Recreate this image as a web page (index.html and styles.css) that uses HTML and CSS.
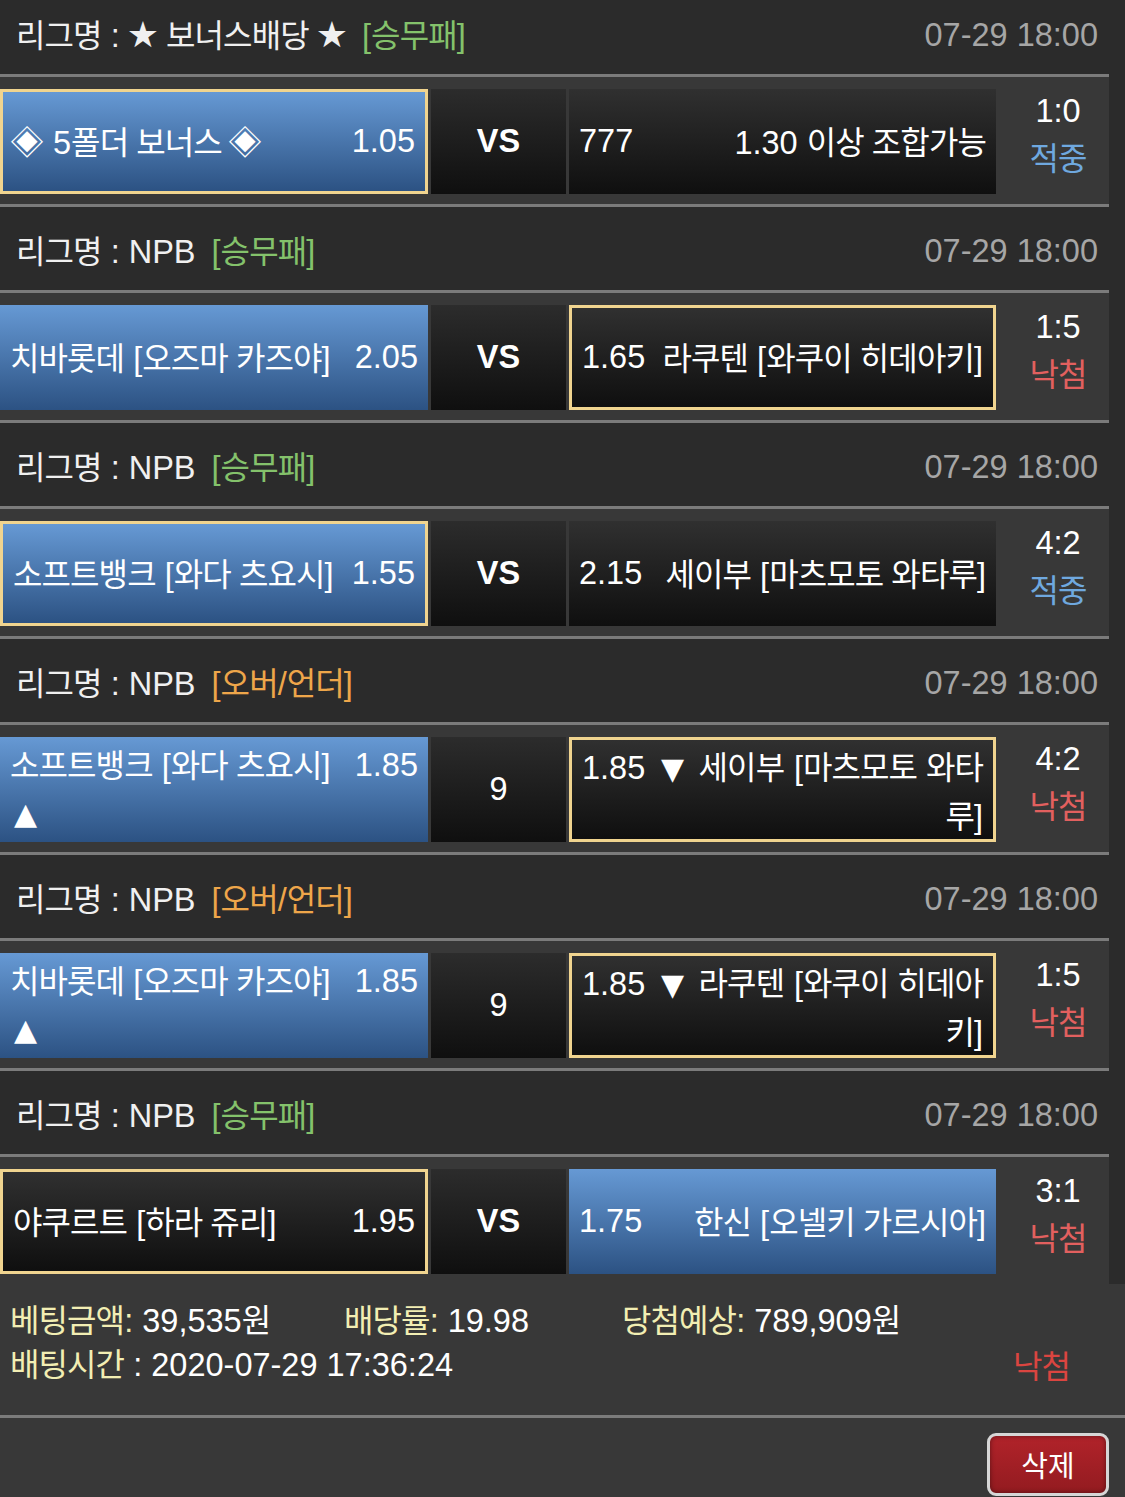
FILE: index.html
```html
<!DOCTYPE html>
<html lang="ko">
<head>
<meta charset="utf-8">
<title>베팅내역</title>
<link rel="stylesheet" href="styles.css">
</head>
<body>
<div class="list">
  <div class="hd first">
    <div class="league"><span class="k">리그명</span> : <span class="star">★</span> <span class="k">보너스배당</span> <span class="star">★</span> <span class="tag win">[<span class="k">승무패</span>]</span></div>
    <div class="date">07-29 18:00</div>
  </div>
  <div class="sep"></div>
  <div class="match">
    <div class="box l blue sel"><span><span class="dia">◈</span> 5<span class="k">폴더 보너스</span> <span class="dia">◈</span></span><span>1.05</span></div>
    <div class="mid bold">VS</div>
    <div class="box r dark"><span>777</span><span>1.30 <span class="k">이상 조합가능</span></span></div>
    <div class="score"><div class="sl">1:0</div><div class="sl k hit">적중</div></div>
  </div>
  <div class="sep"></div>

  <div class="hd">
    <div class="league"><span class="k">리그명</span> : NPB <span class="tag win">[<span class="k">승무패</span>]</span></div>
    <div class="date">07-29 18:00</div>
  </div>
  <div class="sep"></div>
  <div class="match">
    <div class="box l blue"><span><span class="k">치바롯데</span> [<span class="k">오즈마 카즈야</span>]</span><span>2.05</span></div>
    <div class="mid bold">VS</div>
    <div class="box r dark sel"><span>1.65</span><span><span class="k">라쿠텐</span> [<span class="k">와쿠이 히데아키</span>]</span></div>
    <div class="score"><div class="sl">1:5</div><div class="sl k lose">낙첨</div></div>
  </div>
  <div class="sep"></div>

  <div class="hd">
    <div class="league"><span class="k">리그명</span> : NPB <span class="tag win">[<span class="k">승무패</span>]</span></div>
    <div class="date">07-29 18:00</div>
  </div>
  <div class="sep"></div>
  <div class="match">
    <div class="box l blue sel"><span><span class="k">소프트뱅크</span> [<span class="k">와다 츠요시</span>]</span><span>1.55</span></div>
    <div class="mid bold">VS</div>
    <div class="box r dark"><span>2.15</span><span><span class="k">세이부</span> [<span class="k">마츠모토 와타루</span>]</span></div>
    <div class="score"><div class="sl">4:2</div><div class="sl k hit">적중</div></div>
  </div>
  <div class="sep"></div>

  <div class="hd">
    <div class="league"><span class="k">리그명</span> : NPB <span class="tag ou-tag">[<span class="k">오버</span>/<span class="k">언더</span>]</span></div>
    <div class="date">07-29 18:00</div>
  </div>
  <div class="sep"></div>
  <div class="match">
    <div class="box l blue ou">
      <div class="ln"><span><span class="k">소프트뱅크</span> [<span class="k">와다 츠요시</span>]</span><span>1.85</span></div>
      <div class="ln"><span class="tri up">▲</span></div>
    </div>
    <div class="mid">9</div>
    <div class="box r dark sel ou">
      <div class="jl">1.85 <span class="tri dn">▼</span> <span class="k">세이부</span> [<span class="k">마츠모토 와타</span></div>
      <div class="rl"><span class="k">루</span>]</div>
    </div>
    <div class="score"><div class="sl">4:2</div><div class="sl k lose">낙첨</div></div>
  </div>
  <div class="sep"></div>

  <div class="hd">
    <div class="league"><span class="k">리그명</span> : NPB <span class="tag ou-tag">[<span class="k">오버</span>/<span class="k">언더</span>]</span></div>
    <div class="date">07-29 18:00</div>
  </div>
  <div class="sep"></div>
  <div class="match">
    <div class="box l blue ou">
      <div class="ln"><span><span class="k">치바롯데</span> [<span class="k">오즈마 카즈야</span>]</span><span>1.85</span></div>
      <div class="ln"><span class="tri up">▲</span></div>
    </div>
    <div class="mid">9</div>
    <div class="box r dark sel ou">
      <div class="jl">1.85 <span class="tri dn">▼</span> <span class="k">라쿠텐</span> [<span class="k">와쿠이 히데아</span></div>
      <div class="rl"><span class="k">키</span>]</div>
    </div>
    <div class="score"><div class="sl">1:5</div><div class="sl k lose">낙첨</div></div>
  </div>
  <div class="sep"></div>

  <div class="hd">
    <div class="league"><span class="k">리그명</span> : NPB <span class="tag win">[<span class="k">승무패</span>]</span></div>
    <div class="date">07-29 18:00</div>
  </div>
  <div class="sep"></div>
  <div class="match">
    <div class="box l dark sel"><span><span class="k">야쿠르트</span> [<span class="k">하라 쥬리</span>]</span><span>1.95</span></div>
    <div class="mid bold">VS</div>
    <div class="box r blue"><span>1.75</span><span><span class="k">한신</span> [<span class="k">오넬키 가르시아</span>]</span></div>
    <div class="score"><div class="sl">3:1</div><div class="sl k lose">낙첨</div></div>
  </div>
</div>

<div class="summary">
  <div class="srow">
    <span class="c1"><span class="lbl k">베팅금액</span><span class="lbl">:</span> 39,535<span class="k">원</span></span>
    <span class="c2"><span class="lbl k">배당률</span><span class="lbl">:</span> 19.98</span>
    <span class="c3"><span class="lbl k">당첨예상</span><span class="lbl">:</span> 789,909<span class="k">원</span></span>
  </div>
  <div class="srow sb">
    <span><span class="lbl k">배팅시간</span> : 2020-07-29 17:36:24</span>
    <span class="k result">낙첨</span>
  </div>
</div>
<div class="bottom">
  <button class="del" type="button">삭제</button>
</div>
</body>
</html>
```

FILE: styles.css
```css
html, body {
  margin: 0;
  padding: 0;
}

body {
  background: #2b2b2b;
  color: #f2f2f2;
  font-family: "Liberation Sans", "Noto Sans CJK KR", sans-serif;
  font-size: 32.5px;
  line-height: 1.2;
  width: 1125px;
  overflow: hidden;
}

.k {
  font-family: "Noto Sans CJK KR", sans-serif;
  font-size: 32px;
  letter-spacing: -0.9px;
}

.star {
  font-family: "DejaVu Sans", sans-serif;
  font-size: 36px;
  line-height: 1;
  margin: 0 -2px;
}

.dia {
  font-family: "Noto Sans CJK KR", sans-serif;
  font-size: 34px;
  line-height: 1;
  margin: 0 0 0 -3px;
}

.tri {
  font-family: "DejaVu Sans", sans-serif;
  font-size: 30px;
}

.tri.up {
  margin-left: 4px;
}

.tri.dn {
  margin: 0 4px 0 6px;
}

.list {
  width: 1109px;
}

.hd {
  height: 83px;
  box-sizing: border-box;
  padding: 5px 11px 0 16px;
  display: flex;
  align-items: center;
  justify-content: space-between;
  background: #2b2b2b;
  white-space: nowrap;
}

.hd.first {
  height: 74px;
  padding: 0 11px 4px 16px;
}

.league {
  color: #f0f0f0;
}

.tag {
  margin-left: 7px;
}

.win {
  color: #84c26b;
}

.ou-tag {
  color: #eea64a;
}

.date {
  color: #a6a6a6;
}

.sep {
  height: 3px;
  background: #7b7b7b;
}

.match {
  height: 127px;
  box-sizing: border-box;
  padding-top: 12px;
  background: #383838;
  display: flex;
  align-items: flex-start;
  gap: 3px;
}

.box {
  height: 105px;
  box-sizing: border-box;
  padding: 0 10px;
  display: flex;
  align-items: center;
  justify-content: space-between;
  color: #ffffff;
  white-space: nowrap;
}

.box.l {
  width: 428px;
}

.box.r {
  width: 427px;
}

.blue {
  background: linear-gradient(to bottom, #6699d4, #2c5283);
}

.dark {
  background: linear-gradient(to bottom, #303030, #0f0f0f);
}

.sel {
  border: 3px solid #f0d48f;
}

.ou {
  flex-direction: column;
  align-items: stretch;
  justify-content: center;
}

.ln {
  height: 49px;
  display: flex;
  align-items: center;
  justify-content: space-between;
}

.jl {
  height: 49px;
  line-height: 49px;
  text-align: justify;
  text-align-last: justify;
}

.rl {
  height: 49px;
  line-height: 49px;
  text-align: right;
}

.mid {
  width: 135px;
  height: 105px;
  display: flex;
  align-items: center;
  justify-content: center;
  background: linear-gradient(to bottom, #2c2c2c, #0f0f0f);
  color: #ffffff;
}

.bold {
  font-weight: bold;
}

.score {
  flex: 1;
  padding-left: 8px;
  text-align: center;
  color: #ffffff;
}

.sl {
  height: 45px;
  line-height: 45px;
}

.hit {
  color: #6fa8df;
}

.lose {
  color: #e2605f;
}

.summary {
  background: #383838;
  padding: 14px 55px 29px 10px;
  color: #ffffff;
  white-space: nowrap;
}

.srow {
  height: 44px;
  display: flex;
  align-items: center;
}

.srow.sb {
  justify-content: space-between;
}

.c1 {
  width: 334px;
}

.c2 {
  width: 278px;
}

.lbl {
  color: #f2eeb3;
}

.result {
  color: #db4540;
}

.bottom {
  background: #383838;
  border-top: 3px solid #7b7b7b;
  height: 82px;
  box-sizing: border-box;
  padding: 15px 16px 0 0;
  display: flex;
  justify-content: flex-end;
  align-items: flex-start;
}

.del {
  width: 122px;
  height: 63px;
  box-sizing: border-box;
  border: 3px solid #d6d6d6;
  border-radius: 9px;
  background: linear-gradient(to bottom, #b1232a, #931b20);
  box-shadow: inset 0 0 5px rgba(0, 0, 0, 0.45);
  color: #ffffff;
  font-family: "Noto Sans CJK KR", sans-serif;
  font-size: 29px;
  padding: 0;
  line-height: 1;
}
```
